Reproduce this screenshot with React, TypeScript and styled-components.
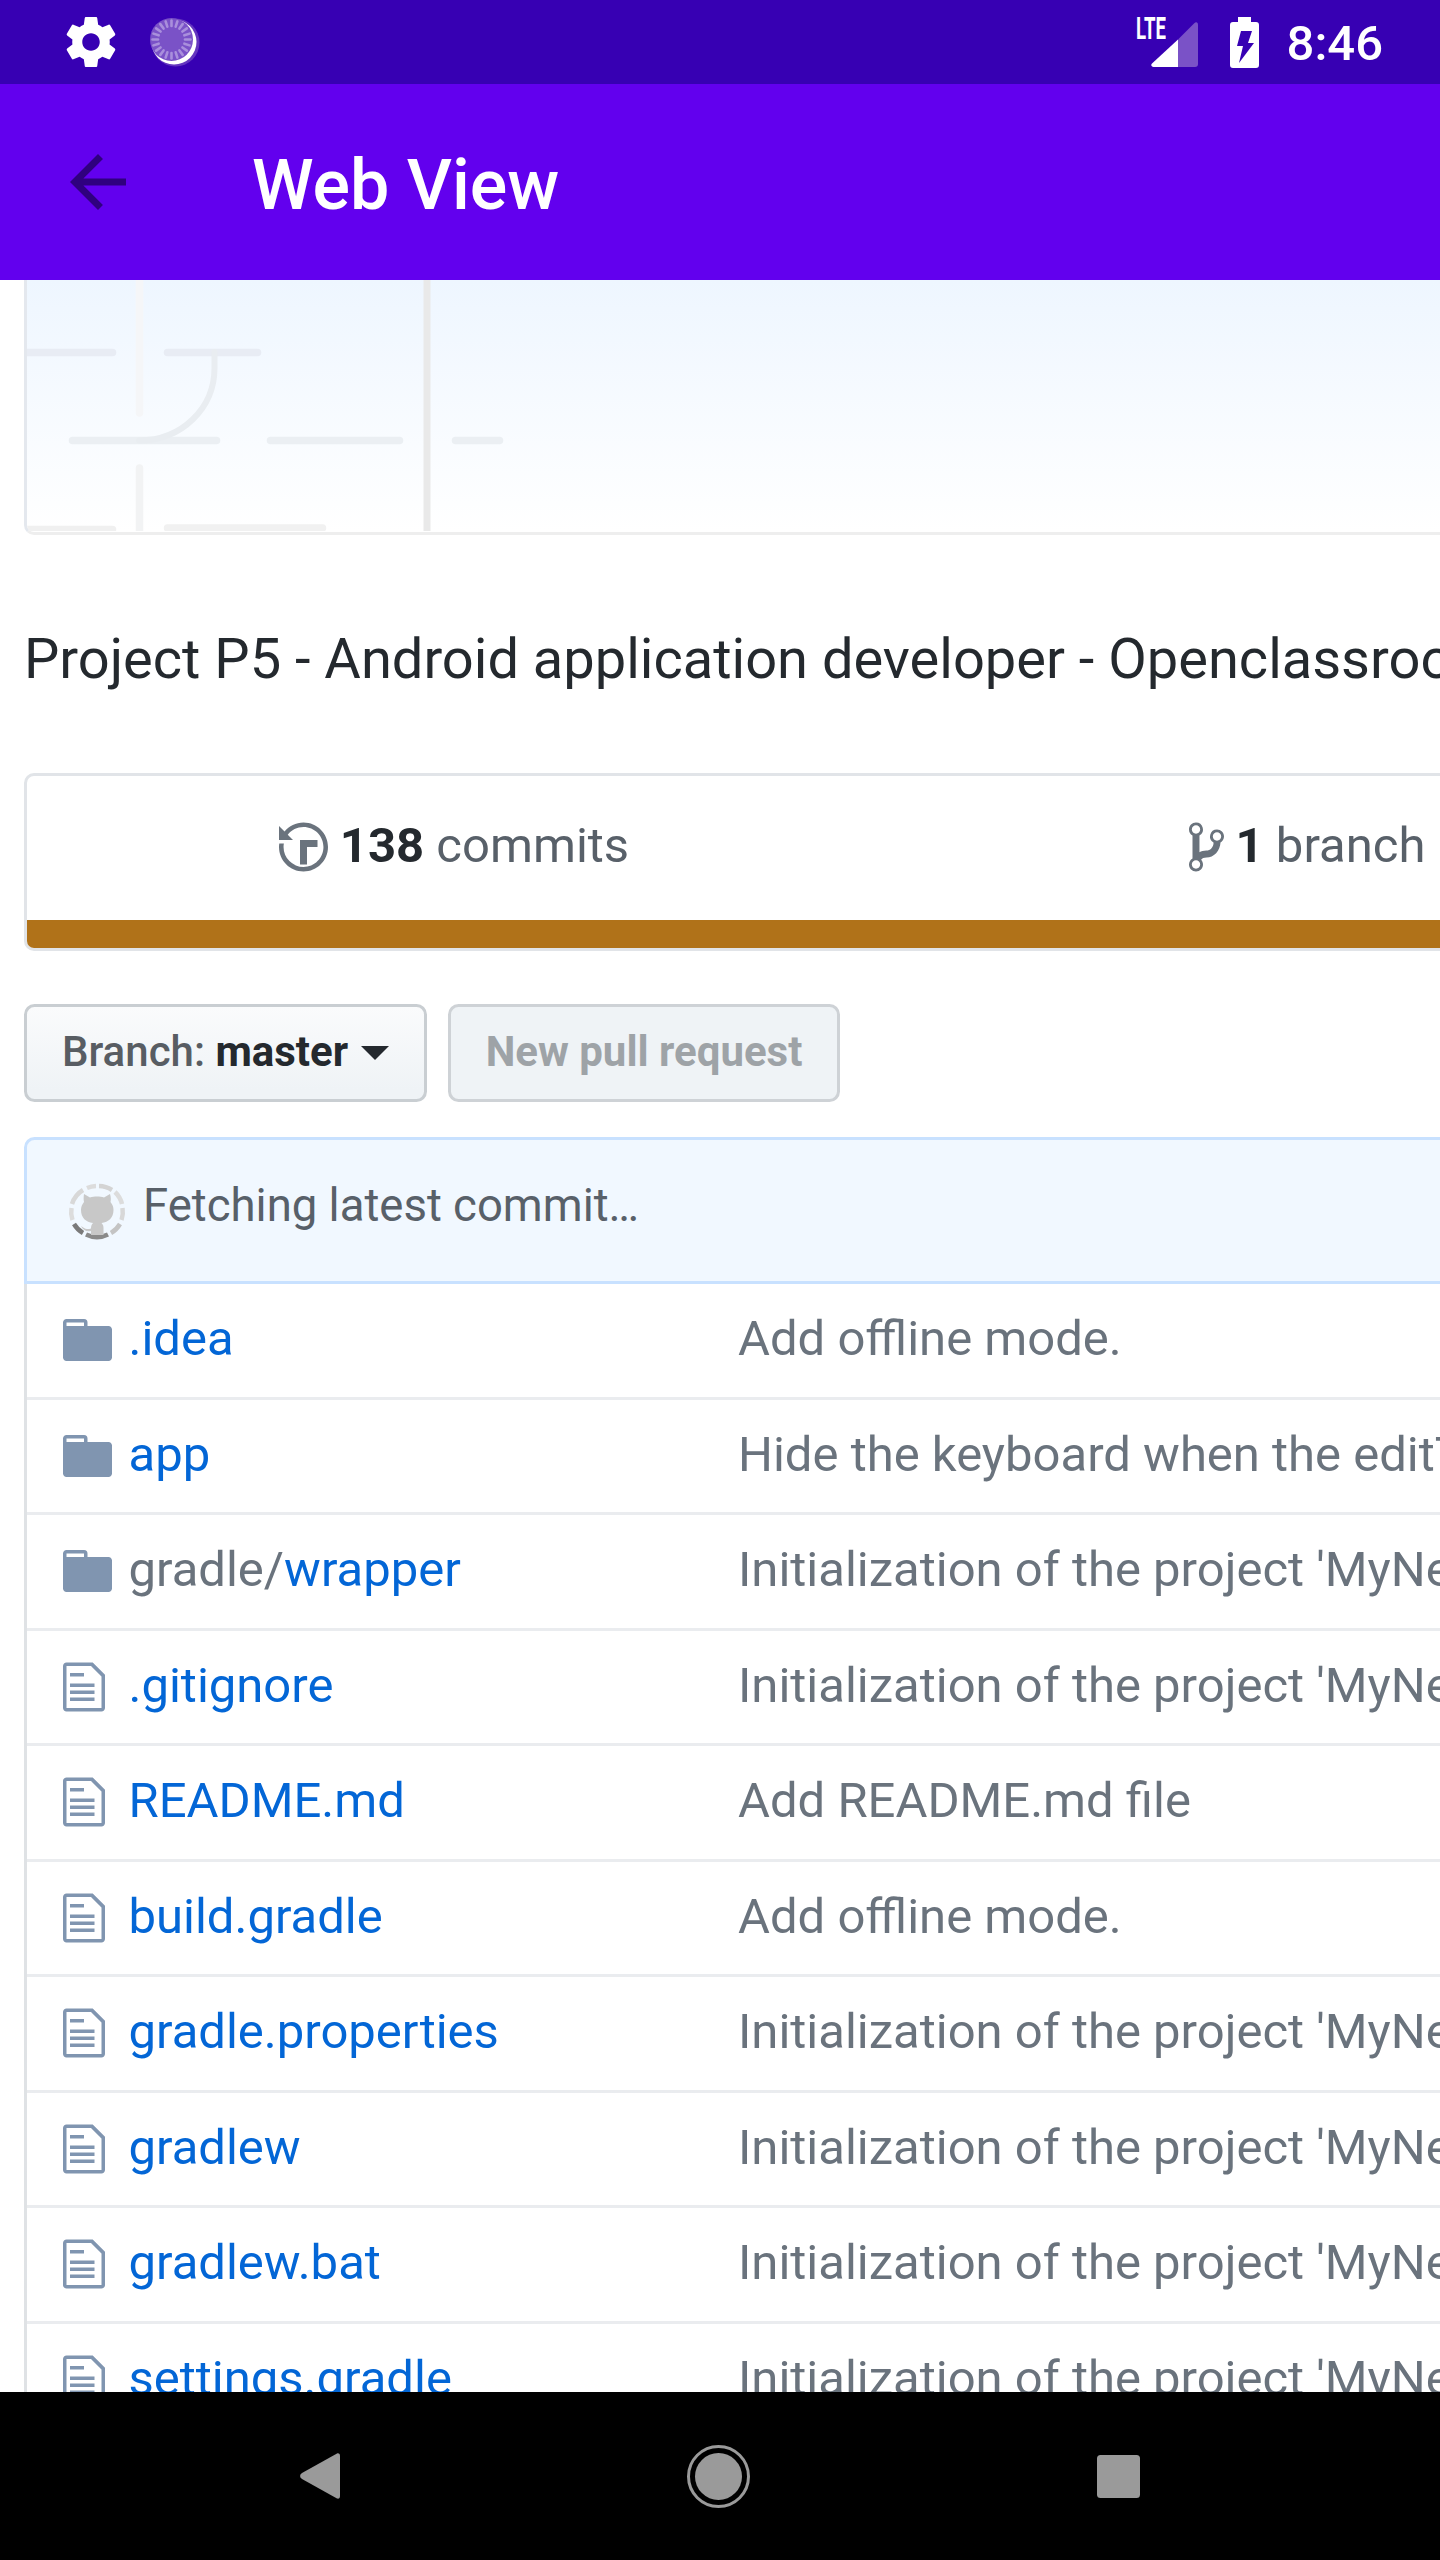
import React from "react";
import styled, { createGlobalStyle } from "styled-components";

const Global = createGlobalStyle`
  html, body { margin: 0; padding: 0; background: #fff; }
  body { font-family: Roboto, "Noto Sans", sans-serif; }
`;

const Screen = styled.div`
  width: 1440px;
  height: 2560px;
  display: flex;
  flex-direction: column;
  overflow: hidden;
  background: #fff;
`;

const StatusBar = styled.div`
  flex: 0 0 84px;
  background: #3700b3;
  display: flex;
  align-items: center;
  padding: 0 57px 0 61px;
`;

const StatusLeft = styled.div`
  display: flex;
  align-items: center;
  gap: 29px;
  flex: 1;
`;

const SignalBox = styled.div`
  position: relative;
  width: 47px;
  height: 47px;
  margin-top: 3px;
  margin-right: 32px;
`;

const LteLabel = styled.span`
  position: absolute;
  left: -15px;
  top: -7px;
  font-size: 31px;
  line-height: 31px;
  font-weight: 700;
  color: #fff;
  transform: scaleX(0.6);
  transform-origin: left center;
`;

const Clock = styled.span`
  font-size: 49px;
  line-height: 81px;
  font-weight: 500;
  color: #fff;
  margin-left: 28px;
  padding-top: 3px;
`;

const IconBlock = styled.svg`
  display: block;
  flex: none;
`;

const Toolbar = styled.div`
  flex: 0 0 196px;
  background: #6200ee;
  display: flex;
  align-items: center;
  padding-left: 70px;
`;

const Title = styled.h1`
  margin: 0 0 0 126px;
  padding-top: 5px;
  font-size: 70px;
  font-weight: 500;
  color: #fff;
  line-height: 1;
`;

const Content = styled.main`
  flex: 1;
  min-height: 0;
  overflow: hidden;
  padding-left: 24px;
`;

const Hero = styled.div`
  width: 3412px;
  height: 255px;
  box-sizing: border-box;
  border-left: 3.5px solid #e4e8ee;
  border-bottom: 3.5px solid #eeeeee;
  border-bottom-left-radius: 10px;
  background: linear-gradient(180deg, #eef6ff 0%, #ffffff 100%);
  overflow: hidden;
`;

const Description = styled.p`
  margin: 0;
  height: 238px;
  box-sizing: border-box;
  padding-top: 10px;
  display: flex;
  align-items: center;
  font-size: 56px;
  line-height: 84px;
  color: #24292e;
  white-space: nowrap;
`;

const Summary = styled.section`
  width: 3412px;
  height: 178px;
  box-sizing: border-box;
  border: 3.5px solid #e1e4e8;
  border-radius: 10px;
  display: flex;
  flex-direction: column;
  overflow: hidden;
`;

const Stats = styled.div`
  flex: 1;
  padding-bottom: 3px;
  display: grid;
  grid-template-columns: repeat(4, 853px);
`;

const Stat = styled.div`
  display: flex;
  align-items: center;
  justify-content: center;
  gap: 12px;
  padding-left: 1px;
  font-size: 49px;
  color: #586069;
  white-space: nowrap;
`;

const StatText = styled.span`
  margin-bottom: 3px;
`;

const StatNum = styled.b`
  font-weight: 700;
  color: #24292e;
`;

const LangBar = styled.div`
  flex: 0 0 28px;
  background: #b07219;
`;

const Actions = styled.div`
  display: flex;
  gap: 21px;
  margin-top: 53px;
`;

const Button = styled.div<{ $disabled?: boolean }>`
  height: 98px;
  box-sizing: border-box;
  display: flex;
  align-items: center;
  gap: 13px;
  padding: 0 34.5px 3px 35px;
  border: 3.5px solid ${(p) => (p.$disabled ? "#ced2d6" : "#c9ced2")};
  border-radius: 10.5px;
  font-size: 42px;
  font-weight: ${(p) => (p.$disabled ? 700 : 500)};
  color: ${(p) => (p.$disabled ? "#9ea3a7" : "#24292e")};
  background: ${(p) =>
    p.$disabled ? "#eff3f6" : "linear-gradient(180deg, #fafbfc 0%, #eff3f6 90%)"};
  white-space: nowrap;
`;

const ButtonLabel = styled.span`
  color: #585d63;
`;

const ButtonStrong = styled.b`
  font-weight: 700;
  color: #24292e;
`;

const Caret = styled.span`
  width: 0;
  height: 0;
  margin-top: 3px;
  border-left: 14px solid transparent;
  border-right: 14px solid transparent;
  border-top: 14px solid #24292e;
`;

const Files = styled.section`
  width: 3412px;
  margin-top: 35px;
`;

const CommitHeader = styled.div`
  height: 147px;
  box-sizing: border-box;
  display: flex;
  align-items: center;
  gap: 17px;
  padding-left: 41px;
  background: #f1f8ff;
  border: 3.5px solid #c8e1ff;
  border-radius: 10.5px 10.5px 0 0;
  font-size: 45.5px;
  color: #586069;
`;

const CommitText = styled.span`
  margin-bottom: 10px;
`;

const Rows = styled.div`
  border-left: 3.5px solid #dfe2e5;
`;

const Row = styled.div`
  height: 115.5px;
  box-sizing: border-box;
  display: grid;
  grid-template-columns: 101.5px 609.5px 1fr;
  align-items: center;
  padding-bottom: 3px;
  border-bottom: 3.5px solid #eaecef;
  font-size: 49px;
  white-space: nowrap;
`;

const IconCell = styled.div`
  padding: 3px 0 0 35.5px;
`;

const NameCell = styled.div`
  color: #0366d6;
`;

const Muted = styled.span`
  color: #6a737d;
`;

const Message = styled.div`
  color: #6a737d;
`;

const NavBar = styled.nav`
  flex: 0 0 168px;
  background: #000;
  display: flex;
  align-items: center;
  justify-content: space-between;
  padding: 0 300px;
`;

const NavHome = styled.div`
  width: 63px;
  height: 63px;
  box-sizing: border-box;
  border: 3.5px solid #9a9a9a;
  border-radius: 50%;
  display: flex;
  align-items: center;
  justify-content: center;
  &::after {
    content: "";
    width: 47px;
    height: 47px;
    border-radius: 50%;
    background: #9a9a9a;
  }
`;

const NavSquare = styled.div`
  width: 43px;
  height: 43px;
  border-radius: 3.5px;
  background: #9a9a9a;
`;

const ICON = "#8095b0";

const FolderIcon = () => (
  <IconBlock width={49} height={56} viewBox="0 0 14 16" fill={ICON}>
    <path d="M13 4H7V3c0-.66-.31-1-1-1H1c-.55 0-1 .45-1 1v10c0 .55.45 1 1 1h12c.55 0 1-.45 1-1V5c0-.55-.45-1-1-1zM6 4H1V3h5v1z" />
  </IconBlock>
);

const FileIcon = () => (
  <IconBlock width={42} height={56} viewBox="0 0 12 16" fill={ICON}>
    <path d="M6 5H2V4h4v1zM2 8h7V7H2v1zm0 2h7V9H2v1zm0 2h7v-1H2v1zm10-7.5V14c0 .55-.45 1-1 1H1c-.55 0-1-.45-1-1V2c0-.55.45-1 1-1h7.5L12 4.500zM11 5L8 2H1v12h10V5z" />
  </IconBlock>
);

const GearIcon = () => (
  <IconBlock width={60} height={60} viewBox="0 0 24 24" fill="#fff">
    <path d="M19.43 12.98c.04-.32.07-.64.07-.98s-.03-.66-.07-.98l2.11-1.65c.19-.15.24-.42.12-.64l-2-3.46c-.12-.22-.39-.3-.61-.22l-2.49 1c-.52-.4-1.08-.73-1.69-.98l-.38-2.65C14.46 2.18 14.25 2 14 2h-4c-.25 0-.46.18-.49.42l-.38 2.65c-.61.25-1.17.59-1.69.98l-2.49-1c-.23-.09-.49 0-.61.22l-2 3.46c-.13.22-.07.49.12.64l2.11 1.65c-.04.32-.07.65-.07.98s.03.66.07.98l-2.11 1.65c-.19.15-.24.42-.12.64l2 3.46c.12.22.39.3.61.22l2.49-1c.52.4 1.08.73 1.69.98l.38 2.65c.03.24.24.42.49.42h4c.25 0 .46-.18.49-.42l.38-2.65c.61-.25 1.17-.59 1.69-.98l2.49 1c.23.09.49 0 .61-.22l2-3.46c.12-.22.07-.49-.12-.64l-2.11-1.65zM12 15.5c-1.93 0-3.5-1.57-3.5-3.5s1.57-3.5 3.5-3.5 3.5 1.57 3.5 3.5-1.57 3.5-3.5 3.5z" />
  </IconBlock>
);

const SpinnerIcon = () => (
  <IconBlock width={50} height={50} viewBox="0 0 50 50">
    <circle cx="25.5" cy="25.5" r="24" fill="#6435bf" />
    <circle cx="24" cy="25" r="22.5" fill="#fff" />
    <circle cx="21.5" cy="22.500" r="21.5" fill="#7a52c7" />
    {Array.from({ length: 20 }).map((_, i) => (
      <line
        key={i}
        x1="21.5"
        y1="3.5"
        x2="21.5"
        y2="9"
        stroke="#a98fdc"
        strokeWidth="2.6"
        strokeLinecap="round"
        transform={`rotate(${i * 18} 21.5 22.5)`}
      />
    ))}
  </IconBlock>
);

const SignalIcon = () => (
  <IconBlock width={47} height={47} viewBox="0 0 47 47">
    <path d="M27 19.5V47H2.5C.5 47-.5 45 1 43.5z" fill="#fff" />
    <path d="M27 19.5L43 3.5C45 1.5 47 2 47 5v39c0 2-1 3-3 3H27z" fill="#7a52c7" />
  </IconBlock>
);

const BatteryIcon = () => (
  <IconBlock width={29} height={51} viewBox="0 0 29 51">
    <path
      fillRule="evenodd"
      fill="#fff"
      d="M8 0h13v5h5c2 0 3 1 3 3v40c0 2-1 3-3 3H3c-2 0-3-1-3-3V8c0-2 1-3 3-3h5zM11 14h11l-4 12h6L9 46l4-17H7z"
    />
  </IconBlock>
);

const HistoryIcon = () => (
  <IconBlock width={49} height={56} viewBox="0 0 14 16" fill="#6a737d">
    <path d="M8 13H6V6h5v2H8v5zM7 1C4.81 1 2.87 2.02 1.59 3.59L0 2v4h4L2.5 4.5C3.55 3.17 5.17 2.3 7 2.3c3.14 0 5.7 2.56 5.7 5.7s-2.56 5.7-5.7 5.7A5.71 5.71 0 0 1 1.3 8c0-.34.03-.67.09-1H.08C.03 7.33 0 7.66 0 8c0 3.86 3.14 7 7 7s7-3.14 7-7-3.14-7-7-7z" />
  </IconBlock>
);

const BranchIcon = () => (
  <IconBlock width={35} height={56} viewBox="0 0 10 16" fill="#6a737d">
    <path d="M10 5c0-1.11-.89-2-2-2a1.993 1.993 0 0 0-1 3.72v.3c-.02.52-.23.98-.63 1.38-.4.4-.86.61-1.38.63-.83.02-1.48.16-2 .45V4.72a1.993 1.993 0 0 0-1-3.72C.88 1 0 1.89 0 3a2 2 0 0 0 1 1.72v6.56c-.59.35-1 .99-1 1.72 0 1.11.89 2 2 2 1.11 0 2-.89 2-2 0-.53-.2-1-.53-1.36.09-.06.48-.41.59-.47.25-.11.56-.17.94-.17 1.05-.05 1.95-.45 2.75-1.25S8.95 7.77 9 6.73h-.02C9.59 6.37 10 5.73 10 5zM2 1.8c.66 0 1.2.55 1.2 1.2 0 .65-.55 1.2-1.2 1.2C1.35 4.2.8 3.65.8 3c0-.65.55-1.2 1.2-1.2zm0 12.41c-.66 0-1.2-.55-1.2-1.2 0-.65.55-1.2 1.2-1.2.65 0 1.2.55 1.2 1.2 0 .65-.55 1.2-1.2 1.2zm6-8c-.66 0-1.2-.55-1.2-1.2 0-.65.55-1.2 1.2-1.2.65 0 1.2.55 1.2 1.2 0 .65-.55 1.2-1.2 1.2z" />
  </IconBlock>
);

const AvatarIcon = () => (
  <IconBlock width={58} height={58} viewBox="0 0 58 58" fill="none">
    <g strokeWidth="4.5" strokeLinecap="butt">
      <path d="M19 6a25 25 0 0 1 9-2" stroke="#dcdcdc" />
      <path d="M31 4a25 25 0 0 1 13 4" stroke="#d4d4d4" />
      <path d="M47 10a25 25 0 0 1 7 12" stroke="#dcdcdc" />
      <path d="M54.5 26a25 25 0 0 1-1 12" stroke="#d8d8d8" />
      <path d="M52 42a25 25 0 0 1-9 9" stroke="#c4c4c4" />
      <path d="M40 52.5a25 25 0 0 1-22 0" stroke="#8a8a8a" />
      <path d="M15 51a25 25 0 0 1-9-9" stroke="#7a7a7a" />
      <path d="M4.5 38a25 25 0 0 1-1-12" stroke="#dcdcdc" />
      <path d="M4 22a25 25 0 0 1 11-14" stroke="#d8d8d8" />
    </g>
    <path
      fill="#c8c8c8"
      d="M16 12l6 3.5c4-1.2 10-1.200 14 0l6-3.500c1 3 1 6 .5 8 2 2.500 3 5 3 8 0 8-5 12-12 13 1.500 1.500 2 3 2 5v7H23v-4c-5 1-8-1-10-5 2 1 4 3 6 3 1.500 0 3 0 4-.5 0-2 .5-4 2-5.500-7-1-12-5-12-13 0-3 1-5.500 3-8-.5-2-.5-5 0-8z"
    />
  </IconBlock>
);

const HeroArt = () => (
  <IconBlock width={1416} height={251} viewBox="0 0 1416 251" fill="none">
    <g strokeLinecap="round" strokeWidth="7.5">
      <path d="M-3 72.500H85.500" stroke="#e8ecf4" />
      <path d="M140.500 72.500H230.500" stroke="#e8ecf4" />
      <path d="M45.500 160.500H189.500" stroke="#ebeff3" />
      <path d="M243.500 160.500H372.500" stroke="#ebeff3" />
      <path d="M428.500 160.500H472.500" stroke="#ebeff3" />
      <path d="M-3 249.500H85.500" stroke="#f0f0f0" />
      <path d="M140.500 248H295.500" stroke="#f1f1f1" />
      <path d="M112.500 -10V133" stroke="#f5f6f8" />
      <path d="M112.500 188V260" stroke="#f2f3f4" />
      <path d="M187.500 72V88C187.500 128 155 160.500 112 160.500" stroke="#e9edf1" strokeWidth="6" />
    </g>
    <path d="M396.500 -5H403.500V256H396.500z" fill="#e9e9e9" />
  </IconBlock>
);

const rows: { icon: "dir" | "file"; name: React.ReactNode; msg: string }[] = [
  { icon: "dir", name: ".idea", msg: "Add offline mode." },
  { icon: "dir", name: "app", msg: "Hide the keyboard when the editText loses focus" },
  {
    icon: "dir",
    name: (
      <>
        <Muted>gradle/</Muted>wrapper
      </>
    ),
    msg: "Initialization of the project 'MyNews'",
  },
  { icon: "file", name: ".gitignore", msg: "Initialization of the project 'MyNews'" },
  { icon: "file", name: "README.md", msg: "Add README.md file" },
  { icon: "file", name: "build.gradle", msg: "Add offline mode." },
  { icon: "file", name: "gradle.properties", msg: "Initialization of the project 'MyNews'" },
  { icon: "file", name: "gradlew", msg: "Initialization of the project 'MyNews'" },
  { icon: "file", name: "gradlew.bat", msg: "Initialization of the project 'MyNews'" },
  { icon: "file", name: "settings.gradle", msg: "Initialization of the project 'MyNews'" },
];

export default function App() {
  return (
    <Screen>
      <Global />
      <StatusBar>
        <StatusLeft>
          <GearIcon />
          <SpinnerIcon />
        </StatusLeft>
        <SignalBox>
          <LteLabel>LTE</LteLabel>
          <SignalIcon />
        </SignalBox>
        <BatteryIcon />
        <Clock>8:46</Clock>
      </StatusBar>
      <Toolbar>
        <IconBlock width={56} height={56} viewBox="4 4 16 16" fill="#2f007f">
          <path d="M20 11H7.830l5.590-5.590L12 4l-8 8 8 8 1.410-1.410L7.830 13H20v-2z" />
        </IconBlock>
        <Title>Web View</Title>
      </Toolbar>
      <Content>
        <Hero>
          <HeroArt />
        </Hero>
        <Description>
          Project P5 - Android application developer - Openclassrooms
        </Description>
        <Summary>
          <Stats>
            <Stat>
              <HistoryIcon />
              <StatText>
                <StatNum>138</StatNum> commits
              </StatText>
            </Stat>
            <Stat>
              <BranchIcon />
              <StatText>
                <StatNum>1</StatNum> branch
              </StatText>
            </Stat>
          </Stats>
          <LangBar />
        </Summary>
        <Actions>
          <Button>
            <span>
              <ButtonLabel>Branch: </ButtonLabel>
              <ButtonStrong>master</ButtonStrong>
            </span>
            <Caret />
          </Button>
          <Button $disabled>New pull request</Button>
        </Actions>
        <Files>
          <CommitHeader>
            <AvatarIcon />
            <CommitText>Fetching latest commit…</CommitText>
          </CommitHeader>
          <Rows>
            {rows.map((r, i) => (
              <Row key={i}>
                <IconCell>{r.icon === "dir" ? <FolderIcon /> : <FileIcon />}</IconCell>
                <NameCell>{r.name}</NameCell>
                <Message>{r.msg}</Message>
              </Row>
            ))}
          </Rows>
        </Files>
      </Content>
      <NavBar>
        <IconBlock width={40} height={46} viewBox="0 0 40 46" fill="#9a9a9a">
          <path d="M37 0.500c2-.5 3 .5 3 2.500v40c0 2-1 3-3 2.500L2 26c-2.500-1.500-2.500-4.500 0-6z" />
        </IconBlock>
        <NavHome />
        <NavSquare />
      </NavBar>
    </Screen>
  );
}
